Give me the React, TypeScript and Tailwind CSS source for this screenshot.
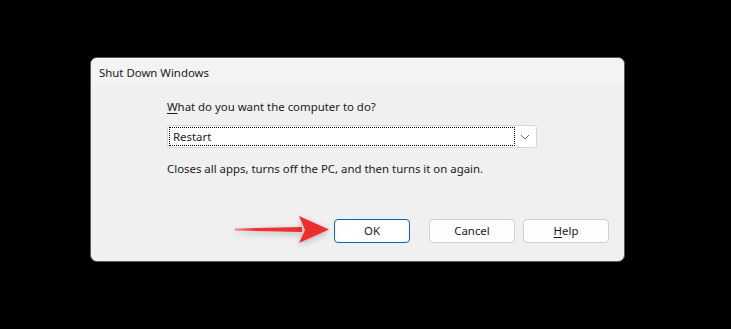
import React from "react";

const font = { fontFamily: '"Noto Sans", "Open Sans", sans-serif' };

function Arrow() {
  return (
    <svg className="absolute left-[230px] top-[211px]" width="105" height="36" viewBox="0 0 105 36">
      <defs>
        <linearGradient id="tail" x1="0" x2="1" y1="0" y2="0">
          <stop offset="0" stopColor="#f04646" stopOpacity="0.6" />
          <stop offset="0.3" stopColor="#ee3434" />
          <stop offset="1" stopColor="#ec2c2c" />
        </linearGradient>
        <filter id="sh" x="-20%" y="-50%" width="140%" height="200%">
          <feDropShadow dx="0" dy="2" stdDeviation="3" floodColor="#000" floodOpacity="0.25" />
        </filter>
      </defs>
      <g filter="url(#sh)">
        <polygon points="5,17.5 72,16 72,21 5,19.5" fill="url(#tail)" />
        <polygon points="69,5 99,18.5 69,32 75,19" fill="#ee2f2f" />
      </g>
    </svg>
  );
}

export default function App() {
  return (
    <div className="relative w-[731px] h-[329px] bg-black overflow-hidden" style={font}>
      <div className="pt-[57px] pl-[90px]">
        <div className="w-[535px] h-[205px] rounded-[7px] overflow-hidden bg-[#f0f0f0] border border-[#5a5a5a] flex flex-col">
          <div className="h-[29px] bg-[#f3f3f3] flex items-center pl-[8px] text-[11.4px] text-[#1a1a1a]">
            Shut Down Windows
          </div>
          <div className="flex-1 flex flex-col pl-[76px] pt-[12px] text-[11.4px] text-[#1a1a1a]">
            <div className="h-[16px] leading-[16px]">
              <span className="underline underline-offset-2">W</span>hat do you want the computer to do?
            </div>
            <div className="mt-[10px] w-[370px] h-[23px] bg-white border border-[#d6d6d6] rounded-[3px] flex items-center pl-[1px] pr-[2px]">
              <div className="flex-1 h-[19px] border border-dotted border-black flex items-center pl-[3px] leading-none">
                Restart
              </div>
              <div className="w-[19px] flex items-center justify-center">
                <svg width="10" height="6" viewBox="0 0 10 6">
                  <path d="M1 1 L5 5 L9 1" fill="none" stroke="#6e6e6e" strokeWidth="1" />
                </svg>
              </div>
            </div>
            <div className="mt-[13px] h-[16px] leading-[16px]">
              Closes all apps, turns off the PC, and then turns it on again.
            </div>
            <div className="mt-[42px] flex gap-[19px] pl-[167px]">
              <button className="w-[76px] h-[24px] bg-white border border-[#0067c0] rounded-[4px] text-[11.4px]">OK</button>
              <div className="flex gap-[8px]">
                <button className="w-[86px] h-[24px] bg-[#fdfdfd] border border-[#d0d0d0] rounded-[4px] text-[11.4px]">Cancel</button>
                <button className="w-[86px] h-[24px] bg-[#fdfdfd] border border-[#d0d0d0] rounded-[4px] text-[11.4px]">
                  <span className="underline underline-offset-2">H</span>elp
                </button>
              </div>
            </div>
          </div>
        </div>
      </div>
      <Arrow />
    </div>
  );
}
